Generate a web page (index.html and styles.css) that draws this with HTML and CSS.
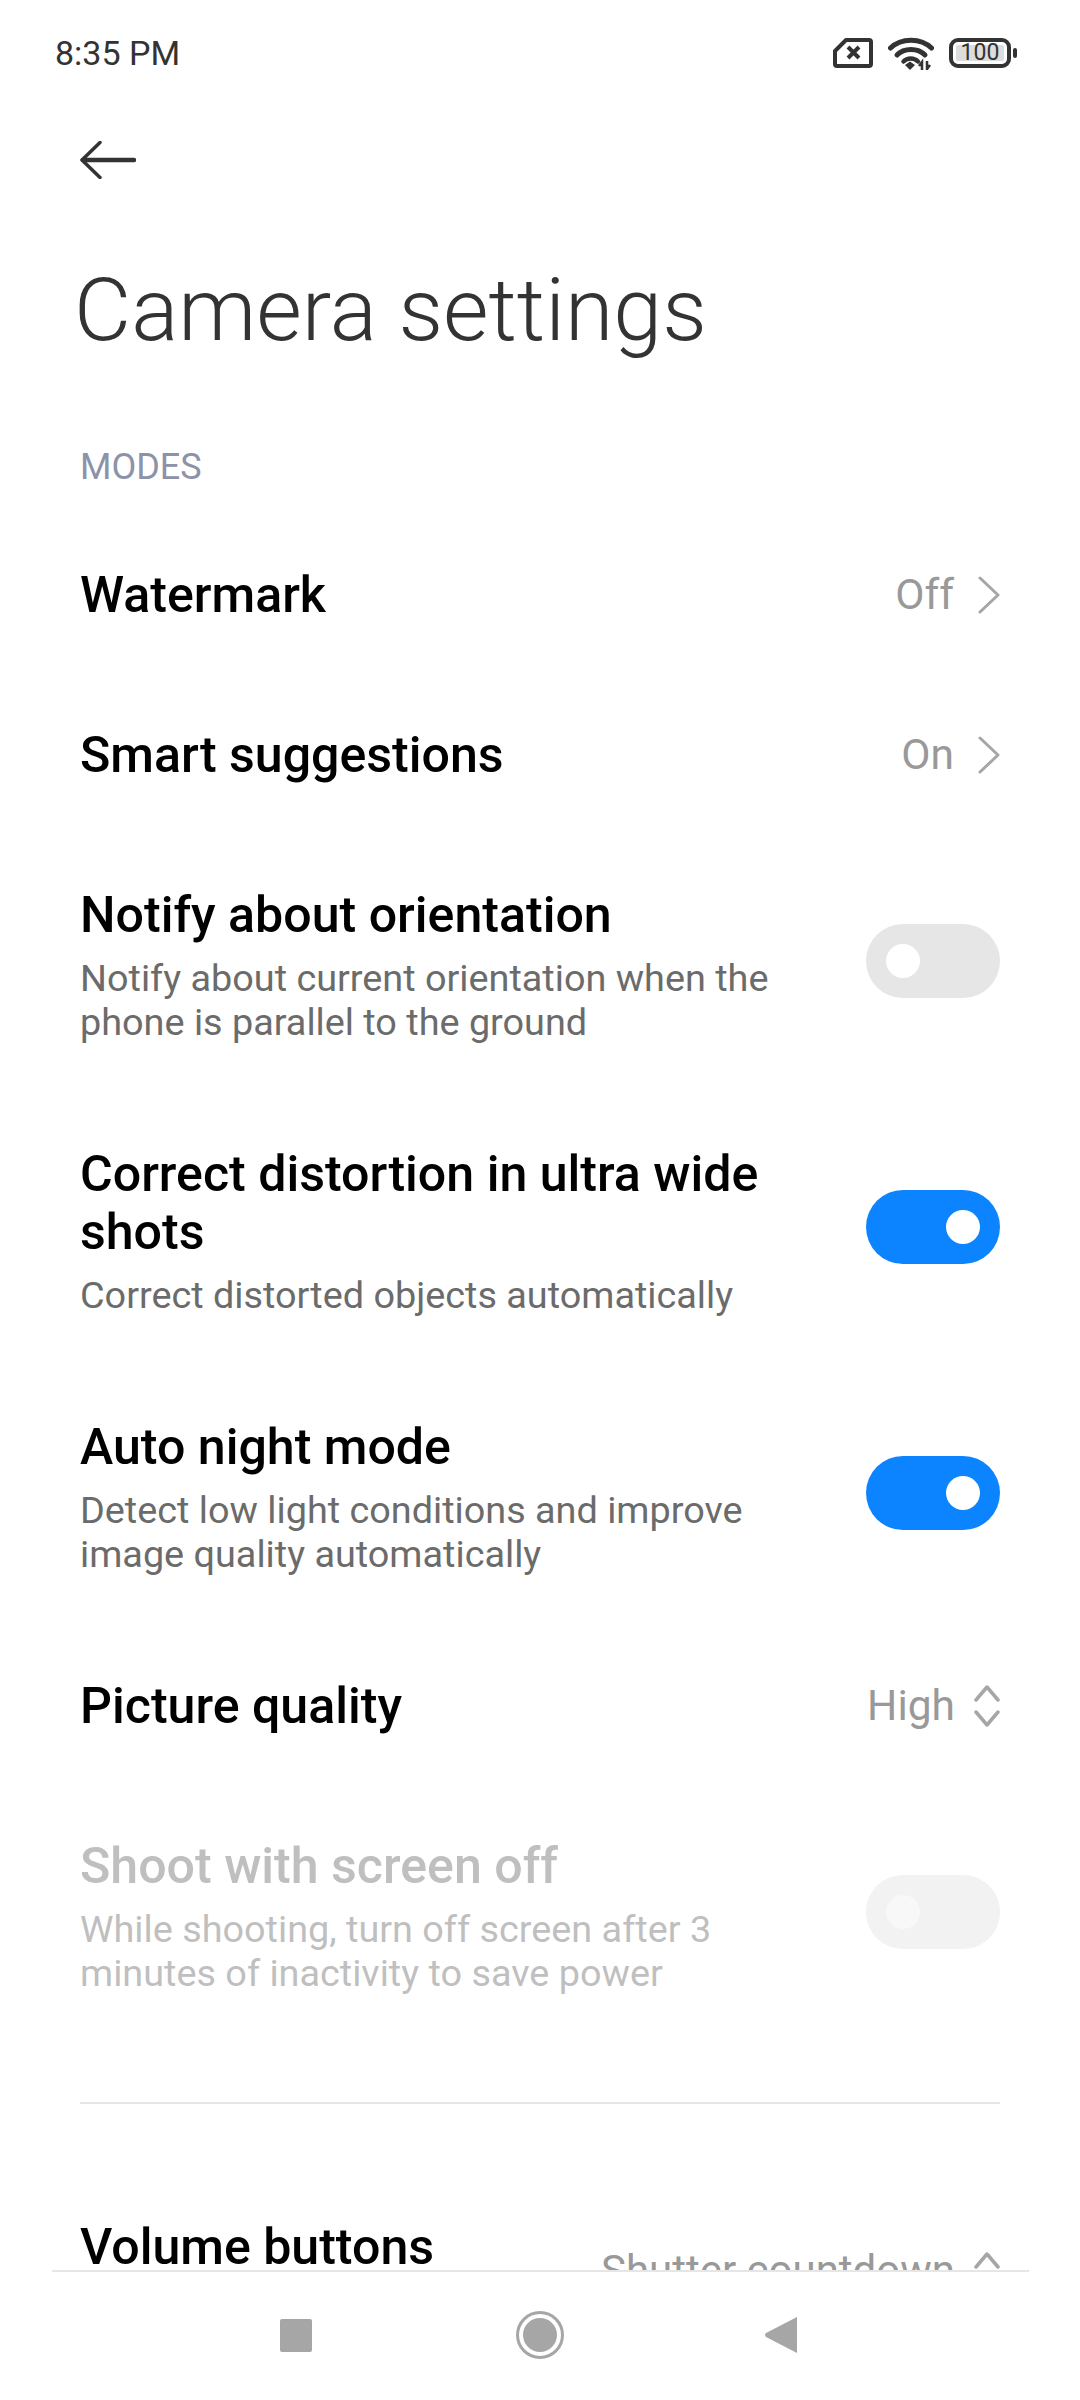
FILE: index.html
```html
<!DOCTYPE html>
<html lang="en">
<head>
    <meta charset="UTF-8">
    <meta name="viewport" content="width=device-width, initial-scale=1.0">
    <title>Camera settings</title>
    <link rel="stylesheet" href="styles.css">
</head>
<body>
    <div class="screen">
        <div class="status-bar">
            <span class="status-time">8:35 PM</span>
            <div class="status-icons">
                <svg class="icon-sim" width="40" height="30" viewBox="0 0 40 30">
                    <path d="M13 2H36a2 2 0 0 1 2 2V26a2 2 0 0 1-2 2H4a2 2 0 0 1-2-2V13Z" fill="none" stroke="#333" stroke-width="4" stroke-linejoin="round"/>
                    <path d="M15 9L26 20M26 9L15 20" stroke="#333" stroke-width="4"/>
                </svg>
                <svg class="icon-wifi" width="46" height="33" viewBox="0 0 46 33">
                    <path d="M2.5 11C13 0.5 33 0.5 43.5 11" fill="none" stroke="#333" stroke-width="5" stroke-linecap="round"/>
                    <path d="M9 18C16 10.5 30 10.5 37 18" fill="none" stroke="#333" stroke-width="5" stroke-linecap="round"/>
                    <path d="M15.5 24.5C19.5 20.5 26 20.5 30 24.5" fill="none" stroke="#333" stroke-width="4.5" stroke-linecap="round"/>
                    <path d="M17 28L22 24.5L27 28L22 33Z" fill="#333"/>
                    <path d="M34 33V25L31 29M39 24V32L42 28" fill="none" stroke="#333" stroke-width="2.5"/>
                </svg>
                <div class="battery">
                    <div class="battery-body"><span class="battery-level">100</span></div>
                    <div class="battery-nub"></div>
                </div>
            </div>
        </div>

        <div class="back-row">
            <svg width="56" height="38" viewBox="0 0 56 38">
                <path d="M20 1.5L2 19L20 36.5" fill="none" stroke="#333" stroke-width="3.5" stroke-linecap="round" stroke-linejoin="round"/>
                <path d="M3 19H54" stroke="#333" stroke-width="4.5" stroke-linecap="round"/>
            </svg>
        </div>

        <h1 class="page-title">Camera settings</h1>
        <div class="section-label">MODES</div>

        <div class="row">
            <div class="row-text"><div class="row-title">Watermark</div></div>
            <div class="row-value">Off</div>
            <svg class="chevron" width="22" height="38" viewBox="0 0 22 38"><path d="M2 2L20 19L2 36" fill="none" stroke="#a6a6a6" stroke-width="3" stroke-linecap="round" stroke-linejoin="round"/></svg>
        </div>
        <div class="row">
            <div class="row-text"><div class="row-title">Smart suggestions</div></div>
            <div class="row-value">On</div>
            <svg class="chevron" width="22" height="38" viewBox="0 0 22 38"><path d="M2 2L20 19L2 36" fill="none" stroke="#a6a6a6" stroke-width="3" stroke-linecap="round" stroke-linejoin="round"/></svg>
        </div>
        <div class="row row-tall">
            <div class="row-text">
                <div class="row-title">Notify about orientation</div>
                <div class="row-sub">Notify about current orientation when the phone is parallel to the ground</div>
            </div>
            <div class="toggle"><div class="knob"></div></div>
        </div>
        <div class="row row-tall">
            <div class="row-text">
                <div class="row-title">Correct distortion in ultra wide shots</div>
                <div class="row-sub">Correct distorted objects automatically</div>
            </div>
            <div class="toggle toggle-on"><div class="knob"></div></div>
        </div>
        <div class="row row-tall">
            <div class="row-text">
                <div class="row-title">Auto night mode</div>
                <div class="row-sub">Detect low light conditions and improve image quality automatically</div>
            </div>
            <div class="toggle toggle-on"><div class="knob"></div></div>
        </div>
        <div class="row">
            <div class="row-text"><div class="row-title">Picture quality</div></div>
            <div class="row-value">High</div>
            <svg class="updown" width="26" height="42" viewBox="0 0 26 42">
                <path d="M2 15L13 2L24 15M2 27L13 40L24 27" fill="none" stroke="#a6a6a6" stroke-width="3.5" stroke-linecap="round" stroke-linejoin="round"/>
            </svg>
        </div>
        <div class="row row-tall row-disabled">
            <div class="row-text">
                <div class="row-title">Shoot with screen off</div>
                <div class="row-sub">While shooting, turn off screen after 3 minutes of inactivity to save power</div>
            </div>
            <div class="toggle"><div class="knob"></div></div>
        </div>

        <div class="divider"></div>

        <div class="row row-volume">
            <div class="row-text"><div class="row-title">Volume buttons</div></div>
            <div class="row-value">Shutter countdown</div>
            <svg class="updown" width="26" height="42" viewBox="0 0 26 42">
                <path d="M2 15L13 2L24 15M2 27L13 40L24 27" fill="none" stroke="#a6a6a6" stroke-width="3.5" stroke-linecap="round" stroke-linejoin="round"/>
            </svg>
        </div>

        <div class="nav-bar">
            <div class="nav-square"></div>
            <div class="nav-home"><div class="nav-home-dot"></div></div>
            <svg class="nav-back" width="34" height="38" viewBox="0 0 34 38"><path d="M33 1V37L2 21Q0 19 2 17Z" fill="#a6a6a6"/></svg>
        </div>
    </div>
</body>
</html>
```

FILE: styles.css
```css
* {
    box-sizing: border-box;
}
html, body {
    margin: 0;
    padding: 0;
    background-color: #fff;
}
body {
    font-family: Roboto, "Noto Sans", sans-serif;
    color: #000;
}
.screen {
    position: relative;
    width: 1080px;
    height: 2400px;
    overflow: hidden;
    background-color: #fff;
}

/* status bar */
.status-bar {
    height: 106px;
    padding: 0 63px 0 55px;
    display: flex;
    align-items: center;
    justify-content: space-between;
}
.status-time {
    font-size: 34px;
    color: #333;
}
.status-icons {
    display: flex;
    align-items: center;
}
.icon-wifi {
    margin-left: 15px;
}
.battery {
    display: flex;
    align-items: center;
    margin-left: 15px;
}
.battery-body {
    width: 62px;
    height: 30px;
    border: 4px solid #333;
    border-radius: 9px;
    padding: 3px;
    display: flex;
}
.battery-level {
    flex: 1;
    background-color: #ddd;
    border-radius: 2px;
    font-size: 23px;
    line-height: 16px;
    text-align: center;
    color: #333;
}
.battery-nub {
    width: 4px;
    height: 10px;
    margin-left: 2px;
    background-color: #333;
    border-radius: 2px;
}

/* header */
.back-row {
    height: 68px;
    padding: 35px 0 0 80px;
}
.page-title {
    margin: 0;
    padding: 86px 0 0 74px;
    font-size: 88px;
    line-height: 100px;
    font-weight: 300;
    color: #333;
}
.section-label {
    margin-top: 85px;
    padding-left: 80px;
    font-size: 36px;
    line-height: 44px;
    color: #8c93a8;
}

/* setting rows */
.row {
    display: flex;
    align-items: center;
    padding: 51px 80px;
}
.section-label + .row {
    margin-top: 26px;
}
.row-tall {
    padding-bottom: 50px;
}
.row-text {
    flex: 1;
    min-width: 0;
    padding-right: 90px;
}
.row-title {
    font-size: 50.1px;
    line-height: 58px;
    font-weight: 500;
}
.row-sub {
    margin-top: 12px;
    font-size: 37.8px;
    line-height: 44px;
    color: #6b6b6b;
}
.row-value {
    flex-shrink: 0;
    font-size: 42.5px;
    line-height: 58px;
    color: #999;
}
.chevron {
    flex-shrink: 0;
    margin-left: 24px;
}
.updown {
    flex-shrink: 0;
    margin-left: 19px;
}
.toggle {
    flex-shrink: 0;
    position: relative;
    width: 134px;
    height: 74px;
    margin-bottom: 9px;
    border-radius: 37px;
    background-color: #e6e6e6;
}
.knob {
    position: absolute;
    top: 20px;
    left: 20px;
    width: 34px;
    height: 34px;
    border-radius: 50%;
    background-color: #fff;
}
.toggle-on {
    background-color: #0d84ff;
}
.toggle-on .knob {
    left: auto;
    right: 20px;
}
.row-disabled .row-title,
.row-disabled .row-sub {
    color: #bfbfbf;
}
.row-disabled .toggle {
    background-color: #f2f2f2;
}
.row-disabled .knob {
    background-color: #f8f8f8;
}
.divider {
    height: 2px;
    margin: 57px 80px 0;
    background-color: #e6e6e6;
}
.row-volume {
    margin-top: 63px;
    min-height: 211px;
    padding-top: 0;
    padding-bottom: 0;
}
.row-volume .row-text {
    align-self: flex-start;
    padding-top: 51px;
}
.row-volume .row-value {
    font-size: 42px;
    margin-bottom: 4px;
}

/* nav bar */
.nav-bar {
    position: absolute;
    left: 0;
    right: 0;
    bottom: 0;
    height: 130px;
    padding-left: 280px;
    background-color: #fff;
    display: flex;
    align-items: center;
}
.nav-bar::before {
    content: "";
    position: absolute;
    top: 0;
    left: 52px;
    right: 51px;
    height: 2px;
    background-color: #e6e6e6;
}
.nav-square {
    width: 32px;
    height: 33px;
    border-radius: 2px;
    background-color: #a6a6a6;
}
.nav-home {
    width: 48px;
    height: 48px;
    margin-left: 204px;
    border: 3px solid #a6a6a6;
    border-radius: 50%;
    display: flex;
    align-items: center;
    justify-content: center;
}
.nav-home-dot {
    width: 34px;
    height: 34px;
    border-radius: 50%;
    background-color: #a6a6a6;
}
.nav-back {
    margin-left: 200px;
}
```
